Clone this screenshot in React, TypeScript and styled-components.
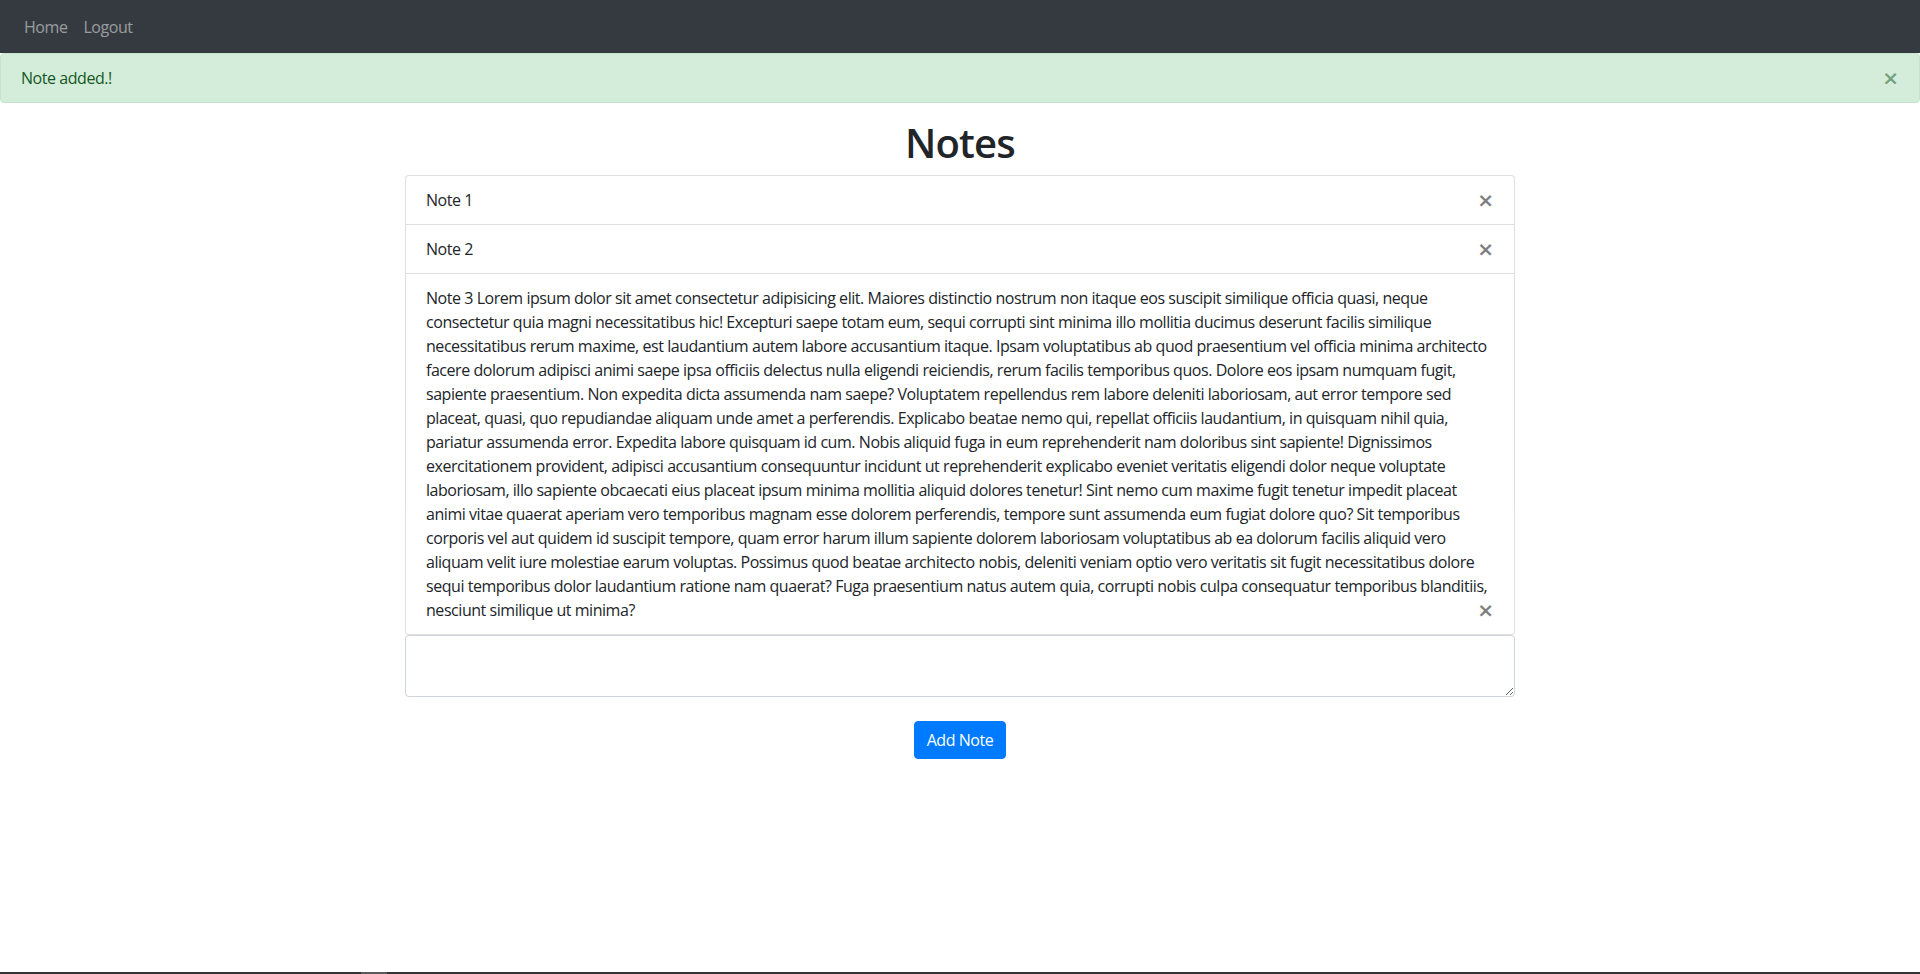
import React, { useState } from 'react';
import styled, { createGlobalStyle } from 'styled-components';

const GlobalStyle = createGlobalStyle`
  *, *::before, *::after {
    box-sizing: border-box;
  }

  html, body {
    margin: 0;
    padding: 0;
    background: #fff;
  }

  body {
    font-family: "Open Sans", "Noto Sans", "Liberation Sans", sans-serif;
    font-size: 16px;
    line-height: 1.5;
    letter-spacing: -0.45px;
    color: #212529;
  }
`;

const Navbar = styled.nav`
  display: flex;
  align-items: center;
  height: 53px;
  padding: 0 16px;
  background-color: #343a40;
`;

const NavLink = styled.a`
  padding: 0 8px;
  color: rgba(255, 255, 255, 0.5);
  text-decoration: none;
  cursor: pointer;

  &:hover {
    color: rgba(255, 255, 255, 0.75);
  }
`;

const Alert = styled.div`
  position: relative;
  padding: 12px 20px;
  margin-bottom: 16px;
  border: 1px solid #c3e6cb;
  border-radius: 4px;
  background-color: #d4edda;
  color: #155724;
`;

const CloseButton = styled.button<{ $inAlert?: boolean }>`
  float: right;
  padding: ${props => (props.$inAlert ? '12px 20px' : '0')};
  margin: 0;
  border: 0;
  background: transparent;
  font-family: "DejaVu Sans", "Liberation Sans", sans-serif;
  font-size: 20px;
  font-weight: 700;
  line-height: 24px;
  letter-spacing: 0;
  color: #000;
  text-shadow: 0 1px 0 #fff;
  opacity: 0.5;
  cursor: pointer;

  ${props => props.$inAlert && `
    position: absolute;
    top: 0;
    right: 0;
    color: inherit;
  `}

  &:hover {
    opacity: 0.75;
  }
`;

const Container = styled.main`
  width: 1140px;
  margin: 0 auto;
  padding: 0 15px;
`;

const Title = styled.h1`
  margin: 0 0 8px;
  text-align: center;
  font-size: 40px;
  font-weight: 600;
  line-height: 1.2;
  letter-spacing: -0.8px;
  color: #212529;
`;

const NoteList = styled.ul`
  display: flex;
  flex-direction: column;
  margin: 0;
  padding: 0;
  list-style: none;
`;

const NoteItem = styled.li`
  padding: 12px 20px;
  border: 1px solid rgba(0, 0, 0, 0.125);
  background-color: #fff;
  color: #212529;

  & + & {
    border-top-width: 0;
  }

  &:first-child {
    border-top-left-radius: 4px;
    border-top-right-radius: 4px;
  }

  &:last-child {
    border-bottom-left-radius: 4px;
    border-bottom-right-radius: 4px;
  }
`;

const NoteInput = styled.textarea`
  display: block;
  width: 100%;
  margin: 0;
  padding: 6px 12px;
  border: 1px solid #ced4da;
  border-radius: 4px;
  font-family: inherit;
  font-size: 16px;
  line-height: 1.5;
  color: #495057;
  resize: vertical;

  &:focus {
    outline: none;
    border-color: #80bdff;
    box-shadow: 0 0 0 3.2px rgba(0, 123, 255, 0.25);
  }
`;

const Actions = styled.div`
  display: flex;
  justify-content: center;
  margin-top: 24px;
`;

const PrimaryButton = styled.button`
  padding: 6px 12px;
  border: 1px solid #007bff;
  border-radius: 4px;
  background-color: #007bff;
  font-family: inherit;
  font-size: 16px;
  line-height: 1.5;
  letter-spacing: inherit;
  color: #fff;
  cursor: pointer;

  &:hover {
    background-color: #0069d9;
    border-color: #0062cc;
  }
`;

const BottomStrip = styled.div`
  position: fixed;
  left: 0;
  right: 0;
  bottom: 0;
  height: 2px;
  background-color: #333;

  &::after {
    content: '';
    position: absolute;
    left: 361px;
    width: 26px;
    top: 0;
    bottom: 0;
    background-color: #5a5a5a;
  }
`;

const initialNotes = [
  'Note 1',
  'Note 2',
  'Note 3 Lorem ipsum dolor sit amet consectetur adipisicing elit. Maiores distinctio nostrum non itaque eos suscipit similique officia quasi, neque consectetur quia magni necessitatibus hic! Excepturi saepe totam eum, sequi corrupti sint minima illo mollitia ducimus deserunt facilis similique necessitatibus rerum maxime, est laudantium autem labore accusantium itaque. Ipsam voluptatibus ab quod praesentium vel officia minima architecto facere dolorum adipisci animi saepe ipsa officiis delectus nulla eligendi reiciendis, rerum facilis temporibus quos. Dolore eos ipsam numquam fugit, sapiente praesentium. Non expedita dicta assumenda nam saepe? Voluptatem repellendus rem labore deleniti laboriosam, aut error tempore sed placeat, quasi, quo repudiandae aliquam unde amet a perferendis. Explicabo beatae nemo qui, repellat officiis laudantium, in quisquam nihil quia, pariatur assumenda error. Expedita labore quisquam id cum. Nobis aliquid fuga in eum reprehenderit nam doloribus sint sapiente! Dignissimos exercitationem provident, adipisci accusantium consequuntur incidunt ut reprehenderit explicabo eveniet veritatis eligendi dolor neque voluptate laboriosam, illo sapiente obcaecati eius placeat ipsum minima mollitia aliquid dolores tenetur! Sint nemo cum maxime fugit tenetur impedit placeat animi vitae quaerat aperiam vero temporibus magnam esse dolorem perferendis, tempore sunt assumenda eum fugiat dolore quo? Sit temporibus corporis vel aut quidem id suscipit tempore, quam error harum illum sapiente dolorem laboriosam voluptatibus ab ea dolorum facilis aliquid vero aliquam velit iure molestiae earum voluptas. Possimus quod beatae architecto nobis, deleniti veniam optio vero veritatis sit fugit necessitatibus dolore sequi temporibus dolor laudantium ratione nam quaerat? Fuga praesentium natus autem quia, corrupti nobis culpa consequatur temporibus blanditiis, nesciunt similique ut minima?',
];

const App: React.FC = () => {
  const [notes, setNotes] = useState<string[]>(initialNotes);
  const [draft, setDraft] = useState('');
  const [showAlert, setShowAlert] = useState(true);

  const addNote = () => {
    if (!draft.trim()) return;
    setNotes([...notes, draft.trim()]);
    setDraft('');
    setShowAlert(true);
  };

  const removeNote = (index: number) => {
    setNotes(notes.filter((_, i) => i !== index));
  };

  return (
    <>
      <GlobalStyle />
      <Navbar>
        <NavLink>Home</NavLink>
        <NavLink>Logout</NavLink>
      </Navbar>
      {showAlert && (
        <Alert role="alert">
          Note added.!
          <CloseButton $inAlert aria-label="Close" onClick={() => setShowAlert(false)}>
            ×
          </CloseButton>
        </Alert>
      )}
      <Container>
        <Title>Notes</Title>
        <NoteList>
          {notes.map((note, i) => (
            <NoteItem key={i}>
              {note}
              <CloseButton aria-label="Delete" onClick={() => removeNote(i)}>
                ×
              </CloseButton>
            </NoteItem>
          ))}
        </NoteList>
        <NoteInput rows={2} value={draft} onChange={e => setDraft(e.target.value)} />
        <Actions>
          <PrimaryButton onClick={addNote}>Add Note</PrimaryButton>
        </Actions>
      </Container>
      <BottomStrip />
    </>
  );
};

export default App;
